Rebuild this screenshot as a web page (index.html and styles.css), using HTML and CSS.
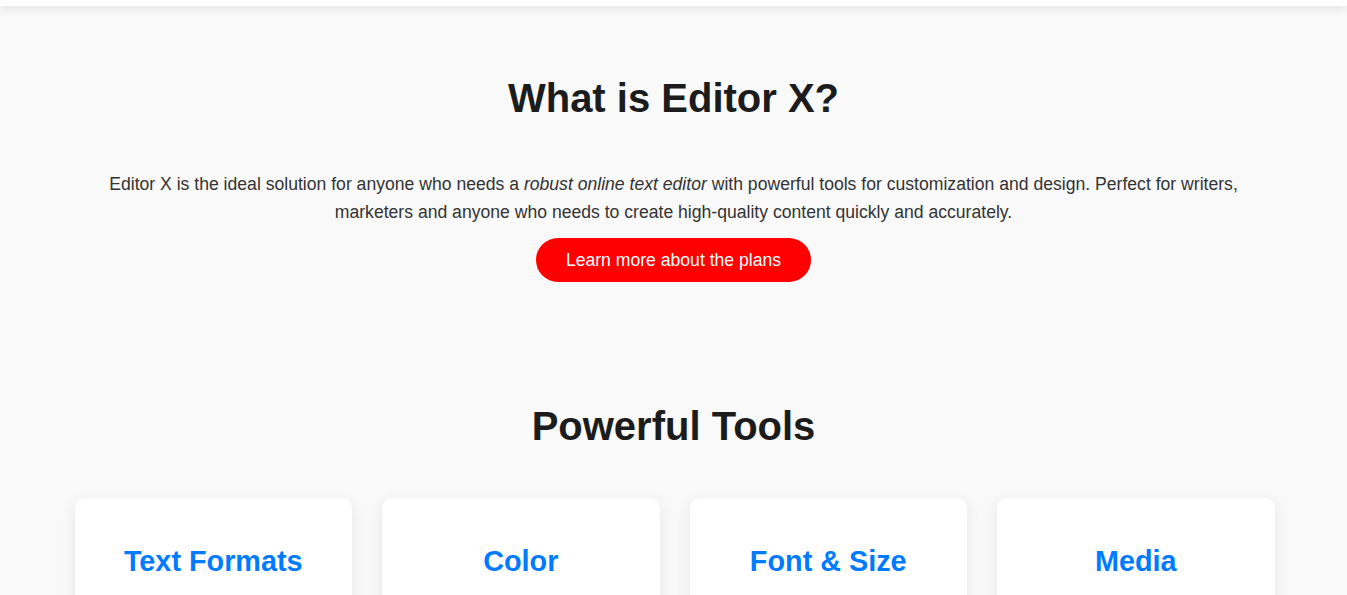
FILE: index.html
```html
<!DOCTYPE html>
<html lang="en">
<head>
<meta charset="utf-8">
<title>Editor X</title>
<link rel="stylesheet" href="styles.css">
</head>
<body>
<header class="topbar"></header>
<main class="container">
  <section class="intro">
    <h2 class="section-title">What is Editor X?</h2>
    <p class="lead">Editor X is the ideal solution for anyone who needs a <em>robust online text editor</em> with powerful tools for customization and design. Perfect for writers, marketers and anyone who needs to create high-quality content quickly and accurately.</p>
    <a class="btn" href="#">Learn more about the plans</a>
  </section>
  <section class="tools">
    <h2 class="section-title">Powerful Tools</h2>
    <div class="cards">
      <div class="card"><h3 class="card-title">Text Formats</h3></div>
      <div class="card"><h3 class="card-title">Color</h3></div>
      <div class="card"><h3 class="card-title">Font &amp; Size</h3></div>
      <div class="card"><h3 class="card-title">Media</h3></div>
    </div>
  </section>
</main>
</body>
</html>
```
FILE: styles.css
```css
* { box-sizing: border-box; }
html, body { margin: 0; padding: 0; }
body {
  background: #f9f9f9;
  font-family: "Liberation Sans", Arial, sans-serif;
  color: #222;
  overflow: hidden;
}
.topbar {
  height: 6px;
  background: #fff;
  box-shadow: 0 2px 10px rgba(0,0,0,0.12);
  position: relative;
  z-index: 2;
}
.container {
  width: 1200px;
  margin: 0 auto;
}
.intro {
  padding-top: 69px;
  display: flex;
  flex-direction: column;
  align-items: center;
  text-align: center;
}
.section-title {
  margin: 0;
  font-size: 40px;
  line-height: 46px;
  font-weight: 700;
  color: #1c1c1c;
  text-align: center;
}
.lead {
  margin: 49px 0 0;
  font-size: 17.6px;
  line-height: 28px;
  color: #333;
}
.btn {
  margin-top: 12px;
  display: inline-block;
  background: #ff0000;
  color: #fff;
  text-decoration: none;
  font-size: 17.6px;
  line-height: 20px;
  padding: 12px 30px;
  border-radius: 22px;
}
.tools {
  padding-top: 121px;
}
.cards {
  margin: 49px -1px 0 1px;
  display: grid;
  grid-template-columns: repeat(4, 1fr);
  gap: 30px;
}
.card {
  background: #fff;
  border-radius: 10px;
  box-shadow: 0 4px 16px rgba(0,0,0,0.08);
  padding: 47px 20px 40px;
  height: 200px;
  text-align: center;
}
.card-title {
  margin: 0;
  font-size: 28.8px;
  line-height: 32px;
  font-weight: 700;
  color: #007bff;
}
```
